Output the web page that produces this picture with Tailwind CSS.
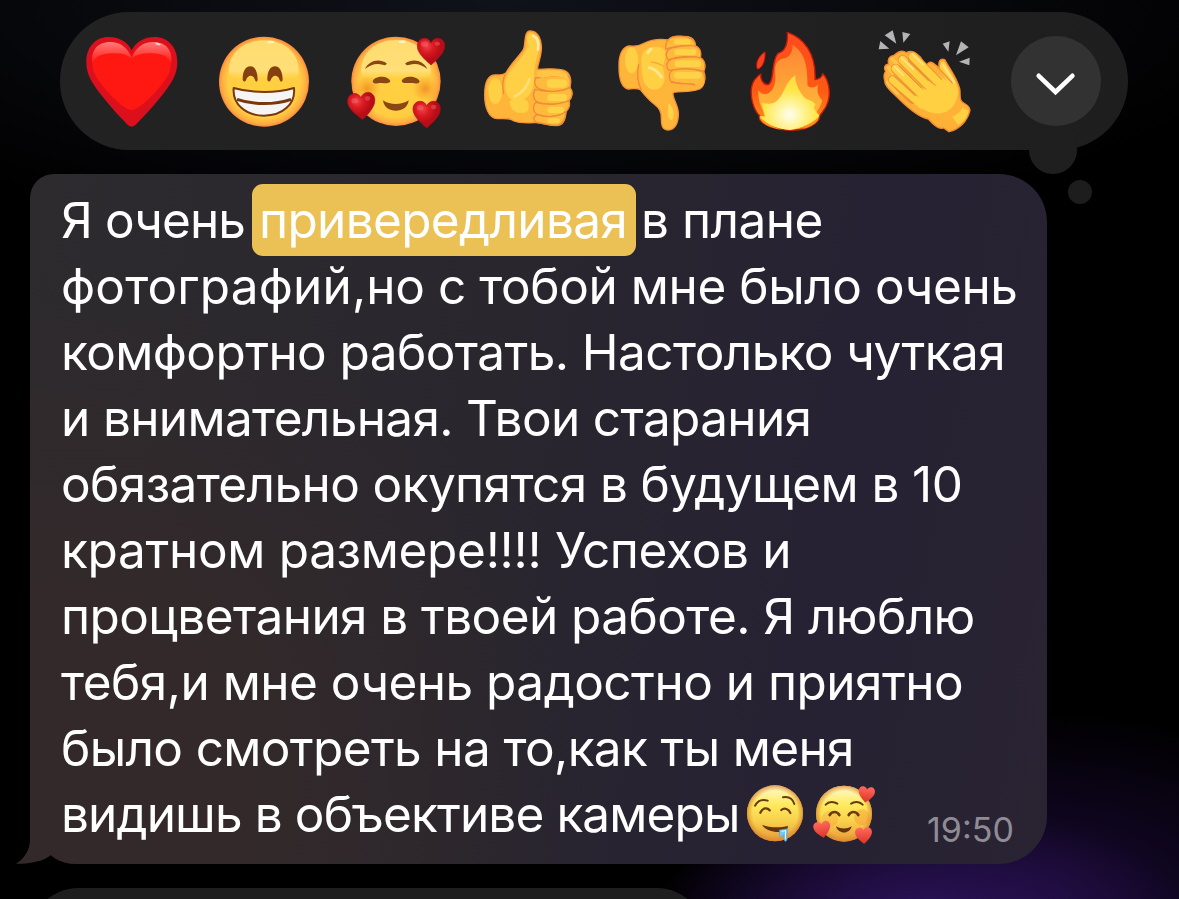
<!DOCTYPE html>
<html lang="ru">
<head>
<meta charset="utf-8">
<title>Сообщение</title>
<script src="https://cdn.jsdelivr.net/npm/@tailwindcss/browser@4"></script>
</head>
<body class="h-[899px] w-[1179px] overflow-hidden bg-black bg-[radial-gradient(ellipse_270px_110px_at_920px_915px,#2b1257_0%,#2b125700_100%),radial-gradient(ellipse_360px_200px_at_1030px_910px,#1b0a38_0%,#1b0a3800_100%),radial-gradient(ellipse_800px_240px_at_500px_0px,#10121a_0%,transparent_100%)] font-['Inter',sans-serif] text-white">
<svg class="absolute size-0">
  <defs>
    <radialGradient id="face"><stop offset="0" stop-color="#ffd03f"/><stop offset=".8" stop-color="#ffcd42"/><stop offset=".93" stop-color="#ffae42"/><stop offset="1" stop-color="#fb8a3c"/></radialGradient>
    <linearGradient id="shine" x1="0" y1="0" x2="0" y2="1"><stop offset="0" stop-color="#ffdc70"/><stop offset=".8" stop-color="#ffdf78"/><stop offset="1" stop-color="#ffd95f" stop-opacity=".2"/></linearGradient>
    <linearGradient id="gloss" x1="0" y1="0" x2="0" y2="1"><stop offset="0" stop-color="#fffbd0"/><stop offset=".35" stop-color="#fdea5c"/><stop offset=".65" stop-color="#f8cf4b"/><stop offset="1" stop-color="#e7973a"/></linearGradient>
    <radialGradient id="rim"><stop offset=".8" stop-color="#e08a2e" stop-opacity="0"/><stop offset="1" stop-color="#d9822b" stop-opacity=".75"/></radialGradient>
    <radialGradient id="blush"><stop offset="0" stop-color="#ef8c1f" stop-opacity=".85"/><stop offset="1" stop-color="#f79a2a" stop-opacity="0"/></radialGradient>
    <radialGradient id="ruby" cx=".35" cy=".3"><stop offset="0" stop-color="#f0414a"/><stop offset=".5" stop-color="#d91a20"/><stop offset="1" stop-color="#b80d18"/></radialGradient>
    <linearGradient id="coral" x1="0" y1="0" x2="0" y2="1"><stop offset="0" stop-color="#ff6a5c"/><stop offset="1" stop-color="#dc3328"/></linearGradient>
    <linearGradient id="lobe" x1="0" y1="0" x2="0" y2="1"><stop offset="0" stop-color="#ff7a78"/><stop offset="1" stop-color="#ff1712"/></linearGradient>
    <linearGradient id="flame" x1="0" y1="0" x2="0" y2="1"><stop offset="0" stop-color="#ff4a1c"/><stop offset=".6" stop-color="#fb5a14"/><stop offset="1" stop-color="#ff9a1c"/></linearGradient>
    <linearGradient id="flame2" x1="0" y1="0" x2="0" y2="1"><stop offset="0" stop-color="#ff8434"/><stop offset=".6" stop-color="#ffac38"/><stop offset="1" stop-color="#ffc638"/></linearGradient>
    <radialGradient id="glow" cx=".5" cy=".72" r=".6"><stop offset="0" stop-color="#fffef0"/><stop offset=".3" stop-color="#fff6a8"/><stop offset=".75" stop-color="#ffe648"/><stop offset="1" stop-color="#ffdf40"/></radialGradient>
    <path id="heart" d="M0 40C-7 33 -41 8 -41 -16C-41 -31 -31 -40 -20 -40C-10 -40 -3 -34 0 -26C4 -34 11 -40 21 -40C32 -40 41 -31 41 -17C41 8 7 33 0 40Z"/>
  </defs>
</svg>
<main class="flex flex-col items-start pt-3">
  <section class="relative ml-[60px] flex h-[138px] w-[1068px] rounded-full bg-linear-to-r from-[#222223] via-[#222222] to-[#1e1e1e] pl-[6px]">
    <div class="absolute top-[114px] left-[969px] size-12 rounded-full bg-[#1f1f20]"></div>
    <div class="absolute top-[168px] left-[1008px] size-6 rounded-full bg-[#1d1d1d]"></div>

    <svg class="h-[138px] w-[132px]" viewBox="18 6 396 414">
      <path d="M215 350C206 350 200 341 190 331C160 300 118 251 98 219C84 196 79 178 79 155C79 112 106 81 146 81C177 81 202 95 215 121C228 95 253 81 284 81C324 81 352 112 352 155C352 178 346 198 332 220C312 252 270 301 240 331C230 341 224 350 215 350Z" fill="#dc0f1c"/>
      <path d="M215 300C188 300 120 226 102 188C88 145 106 98 150 96C182 96 203 113 215 140C227 113 248 96 280 96C324 98 343 145 328 188C310 226 242 300 215 300Z" fill="#ff1712"/>
      <path d="M97 160C92 122 112 96 150 96C182 96 203 113 215 145C200 133 180 128 155 130C125 131 105 140 97 160Z" fill="url(#lobe)"/>
      <path d="M334 160C339 122 319 96 281 96C248 96 227 113 215 145C230 133 250 128 276 130C306 131 326 140 334 160Z" fill="url(#lobe)"/>
      <ellipse cx="294" cy="102" rx="8" ry="3" fill="#ffd9d6" transform="rotate(12 294 102)"/>
    </svg>

    <svg class="h-[138px] w-[132px]" viewBox="414 6 396 414">
      <circle cx="612" cy="215" r="135" fill="url(#face)"/>
      <path d="M507 190C503 130 550 91 612 91C674 91 720 130 716 190C712 212 670 204 612 204C554 204 511 212 507 190Z" fill="url(#shine)"/>
      <ellipse cx="632" cy="96" rx="11" ry="4" fill="#fff3c4"/>
      <path d="M548 209C548 185 556 169 571 169C586 169 593 186 593 211C590 216 588 217 585 210C580 193 563 193 558 211C554 217 550 215 548 209Z" fill="#86400f"/>
      <path d="M622 209C622 185 630 169 645 169C660 169 668 186 668 211C665 216 662 217 659 210C654 193 637 193 632 211C628 217 624 215 622 209Z" fill="#86400f"/>
      <path d="M521 234C575 250 650 250 702 234C707 282 668 317 612 317C556 317 517 282 521 234Z" fill="#f5f5f6" stroke="#7a360d" stroke-width="6" stroke-linejoin="round"/>
      <path d="M531 268C580 285 645 285 693 268" fill="none" stroke="#7a360d" stroke-width="9"/>
    </svg>

    <svg class="h-[138px] w-[132px]" viewBox="0 6 396 414">
      <circle cx="198" cy="214" r="134" fill="url(#face)"/>
      <path d="M94 190C90 130 136 90 198 90C260 90 306 130 302 190C298 212 256 204 198 204C140 204 98 212 94 190Z" fill="url(#shine)"/>
      <ellipse cx="217" cy="95" rx="11" ry="4" fill="#fff3c4"/>
      <circle cx="112" cy="236" r="40" fill="url(#blush)"/>
      <circle cx="286" cy="236" r="40" fill="url(#blush)"/>
      <path d="M105 177C117 151 148 144 170 160C169 167 163 166 158 164C138 158 120 165 105 177ZM292 177C280 151 249 144 226 160C227 167 234 166 239 164C259 158 277 165 292 177Z" fill="#8a4711"/>
      <path d="M128 214C134 196 173 196 181 213C179 221 171 220 155 219C139 219 131 225 128 214ZM215 213C222 196 261 196 269 214C266 225 258 219 242 219C226 219 217 221 215 213Z" fill="#8a4711"/>
      <path d="M159 271C180 286 214 286 236 271C232 313 163 313 159 271Z" fill="#8a4711"/>
      <g fill="url(#ruby)" stroke="#a90c17" stroke-width="2">
        <use href="#heart" transform="translate(303 125)"/>
        <use href="#heart" transform="translate(95 289) rotate(-5)"/>
        <use href="#heart" transform="translate(290 314)"/>
      </g>
      <g fill="#ff8088" opacity=".35">
        <ellipse cx="284" cy="102" rx="11" ry="8"/><ellipse cx="322" cy="101" rx="8" ry="6"/>
        <ellipse cx="74" cy="272" rx="10" ry="8"/><ellipse cx="113" cy="265" rx="8" ry="7"/>
        <ellipse cx="270" cy="293" rx="10" ry="8"/><ellipse cx="311" cy="291" rx="8" ry="7"/>
      </g>
    </svg>

    <svg class="h-[138px] w-[132px]" viewBox="396 6 396 414">
      <path d="M464 255C464 220 474 197 493 195C506 194 519 198 529 187C545 157 570 137 580 119C588 104 580 63 601 63C624 63 636 90 634 118C633 142 624 160 622 178C649 176 684 174 704 182C721 190 726 212 719 232C730 244 727 264 717 272C720 288 715 297 708 303C707 326 700 347 680 347C655 347 645 339 617 338C590 339 568 340 552 333C538 322 520 326 502 326C476 326 464 291 464 255Z" fill="#ffb53a" stroke="#f5943a" stroke-width="4"/>
      <ellipse cx="496" cy="243" rx="21" ry="39" fill="#ffd043"/>
      <path d="M530 200C548 169 584 138 593 110C592 96 588 74 602 70C622 74 630 94 624 128C615 160 611 180 613 208C609 256 590 270 560 272C530 275 518 230 530 200Z" fill="#ffd046"/>
      <path d="M609 77C622 82 628 97 624 119" fill="none" stroke="#ffe9a6" stroke-width="8" stroke-linecap="round"/>
      <path d="M598 208C592 231 577 247 555 259" fill="none" stroke="#ffe078" stroke-width="8" stroke-linecap="round"/>
      <path d="M538 272C560 269 582 259 594 275C598 295 599 309 575 309C552 308 540 297 538 272Z" fill="#ffd044"/>
      <path d="M525 192C517 214 517 235 521 252" fill="none" stroke="#ee8c37" stroke-width="4"/>
      <g fill="#ffb93d" stroke="#ee8c37" stroke-width="4" stroke-linejoin="round">
        <path d="M616 204C611 225 617 236 640 240C665 249 700 246 720 232C725 203 716 192 695 196C665 198 635 202 616 204Z"/>
        <path d="M615 238C606 255 611 275 630 279C657 286 698 284 717 272C730 257 728 241 719 233C690 248 642 246 615 238Z"/>
        <path d="M617 277C606 290 609 308 624 314C652 324 690 321 709 304C719 292 720 279 716 272C685 286 645 285 617 277Z"/>
        <path d="M621 314C605 323 610 338 630 339C650 342 661 347 682 346C704 341 707 315 708 304C684 324 645 322 621 314Z"/>
      </g>
      <path d="M624 184C655 179 690 180 704 188C714 194 716 204 716 216C706 199 690 194 640 203C622 205 618 192 624 184Z" fill="#ffc546"/>
      <g fill="#ffd347"><rect x="650" y="208" width="62" height="25" rx="12"/><rect x="652" y="252" width="60" height="22" rx="11"/><rect x="652" y="290" width="50" height="20" rx="10"/><rect x="652" y="325" width="38" height="13" rx="6"/></g>
    </svg>

    <svg class="h-[138px] w-[132px]" viewBox="-18 6 396 414">
      <path d="M57 170C56 130 70 108 91 108C108 110 120 107 132 100C150 91 178 86 205 90C215 75 244 78 264 80C281 84 286 95 286 107C301 114 303 128 301 143C316 153 317 172 311 184C319 203 314 235 292 239C268 247 243 243 220 247C213 258 234 282 235 309C236 333 228 360 204 360C185 360 184 342 184 325C185 304 177 294 163 283C144 268 132 253 121 239C107 231 97 238 85 237C66 233 57 205 57 170Z" fill="#ffb53a" stroke="#f5943a" stroke-width="4"/>
      <ellipse cx="95" cy="151" rx="20" ry="39" fill="#ffd043"/>
      <path d="M125 165C120 137 130 113 163 111C188 110 199 119 196 139C194 158 186 165 191 185C201 218 184 239 161 239C134 236 125 207 125 165Z" fill="#ffd043"/>
      <path d="M143 128L153 117M148 173C164 177 175 187 184 201" fill="none" stroke="#ffe58f" stroke-width="9" stroke-linecap="round"/>
      <path d="M153 157C167 155 182 164 191 169" fill="none" stroke="#f9a83a" stroke-width="4"/>
      <path d="M116 162C111 190 113 219 124 240" fill="none" stroke="#ee8c37" stroke-width="4"/>
      <g fill="#ffb93d" stroke="#ee8c37" stroke-width="4" stroke-linejoin="round">
        <path d="M198 118C194 97 205 81 230 80C267 76 287 88 286 109C260 106 220 108 198 118Z"/>
        <path d="M205 150C192 132 200 116 224 112C254 106 279 104 291 111C305 119 303 137 301 144C270 137 231 139 205 150Z"/>
        <path d="M206 181C195 166 201 150 221 146C249 141 284 138 302 144C318 153 316 175 311 184C285 176 231 179 206 181Z"/>
        <path d="M211 213C205 196 207 183 224 179C257 174 288 177 307 184C319 200 315 234 291 238L283 223C250 221 230 223 211 213Z"/>
      </g>
      <g fill="#ffd347"><rect x="222" y="88" width="50" height="15" rx="7"/><rect x="223" y="118" width="66" height="17" rx="8"/><rect x="224" y="151" width="79" height="20" rx="10"/><rect x="222" y="186" width="82" height="20" rx="10"/></g>
      <path d="M208 214C245 224 258 219 284 224C306 222 311 216 313 205C315 229 302 237 284 240L218 245C195 235 204 224 208 214Z" fill="#ffb53a"/>
      <path d="M212 216C240 223 262 219 285 225" fill="none" stroke="#ee8c37" stroke-width="4"/>
      <path d="M205 278C222 294 225 313 216 331C198 327 205 300 205 278Z" fill="#ffd347"/>
    </svg>

    <svg class="h-[138px] w-[132px]" viewBox="378 6 396 414">
      <path d="M495 125C475 139 466 157 471 176C480 181 499 158 495 125Z" fill="#f5431d" stroke="#b50f10" stroke-width="3"/>
      <path d="M562 67C609 83 649 128 645 209C655 208 666 203 668 191C685 207 693 244 684 275C678 297 668 304 657 320C661 329 650 341 620 354C588 364 548 363 512 350C487 340 472 327 480 319C460 300 450 260 455 231C458 214 469 201 482 192C481 209 489 224 504 224C525 217 511 158 534 130C557 124 564 99 562 67Z" fill="url(#flame)" stroke="#c51a0d" stroke-width="4" stroke-linejoin="round"/>
      <path d="M578 104C609 126 624 155 622 225C632 239 649 232 655 222C648 247 657 260 667 272C658 299 638 334 570 358C510 341 472 300 475 240C495 270 530 244 526 195C523 160 532 147 557 144C573 137 578 120 578 104Z" fill="url(#flame2)"/>
      <path d="M585 196C587 227 600 246 611 260C622 272 633 267 647 283C636 295 649 304 659 318C641 337 610 354 570 360C530 356 495 344 478 319L496 319C488 308 489 291 486 278C507 284 527 281 536 266C555 248 552 223 585 196Z" fill="url(#glow)"/>
      <path d="M478 321C500 340 520 351 545 358C520 357 484 345 478 321ZM656 321C640 340 622 351 600 358C625 355 655 341 656 321Z" fill="#ff9317"/>
    </svg>

    <svg class="h-[138px] w-[132px]" viewBox="-6 6 396 414">
      <path d="M74 76L98 61L109 101ZM127 66L151 72L130 98ZM61 93L88 116L56 118ZM248 101L269 94L265 125ZM303 94L326 112L288 136ZM329 143L328 166L297 155Z" fill="#b4b4b6"/>
      <path d="M204 177C196 158 210 151 224 163L238 174C234 154 240 144 254 149C267 174 289 199 299 236C303 254 295 271 311 279C323 285 329 291 330 301C322 334 298 358 267 365L251 354C236 360 220 344 205 327C177 322 151 300 120 270C96 245 73 230 74 211C70 197 72 190 77 184C70 174 73 164 86 162C82 149 87 138 102 136C113 126 127 119 139 128C156 118 169 130 181 141Z" fill="#ffb137" stroke="#f28a35" stroke-width="4"/>
      <path d="M86 173L112 205M97 147L120 172M83 217L112 250" stroke="#ffc64a" stroke-width="10" stroke-linecap="round"/>
      <path d="M239 177C240 157 248 150 254 157C264 180 288 207 294 242C294 274 276 302 250 308C222 317 190 301 172 284C145 262 112 236 91 213C92 203 103 203 112 210L200 190L230 190L262 214Z" fill="#ffd041"/>
      <g fill="none" stroke-linecap="round">
        <path d="M158 140L232 214" stroke="#ee9236" stroke-width="30"/>
        <path d="M158 140L240 222" stroke="#ffd041" stroke-width="24"/>
        <path d="M128 150L202 224" stroke="#ee9236" stroke-width="30"/>
        <path d="M128 150L215 237" stroke="#ffd041" stroke-width="24"/>
        <path d="M107 176L176 245" stroke="#ee9236" stroke-width="30"/>
        <path d="M107 176L195 262" stroke="#ffd041" stroke-width="24"/>
        <path d="M98 210L158 268" stroke="#ee9236" stroke-width="28"/>
        <path d="M98 210L185 285" stroke="#ffd041" stroke-width="22"/>
        <path d="M157 133L190 164M124 143L160 178M103 170L130 196" stroke="#ffe08a" stroke-width="5"/>
        <path d="M145 152L205 211M118 168L184 232M102 197L165 256" stroke="#ee9236" stroke-width="4"/>
        <path d="M230 168L277 219" stroke="#ee9236" stroke-width="4"/>
        <path d="M250 166C261 185 273 200 282 217" stroke="#ffe183" stroke-width="7"/>
      </g>
      <path d="M276 319C294 314 303 302 307 293L326 303C322 326 304 342 293 344Z" fill="#ffd041"/>
    </svg>

    <button class="mt-6 ml-[21px] flex size-[90px] items-center justify-center rounded-full bg-[#323232]">
      <svg class="size-[90px]" viewBox="0 0 90 90" fill="none" stroke="#fff" stroke-width="4.6" stroke-linecap="round" stroke-linejoin="miter"><path d="M27.700 39.800L44.500 56L61.400 39.800"/></svg>
    </button>
  </section>

  <article class="relative mt-6 ml-[30px] h-[690px] w-[1017px] rounded-tl-[24px] rounded-r-[48px] rounded-bl-[20px] bg-[radial-gradient(ellipse_560px_540px_at_0px_620px,#33292a_0%,#33292a_35%,#33292a00_100%),linear-gradient(100deg,#2d2b2e_0%,#29262e_45%,#262233_75%,#292332_100%)] pt-[13px] pl-[31px] text-[49.5px] leading-[66px] whitespace-nowrap">
    <svg class="absolute -left-[14px] bottom-0 h-[50px] w-[94px]" viewBox="0 0 94 50"><path d="M14 0V24C14 35 8 44 0 49.500C15 50 28 47 34.500 41C42 47 50 50 62 50L14 50Z" fill="#000"/><path d="M14 0V26C14 36 8 45 0 49.800C15 50 28 47 34.500 41C42 47 50 50 62 50H94V0Z" fill="#33292a"/></svg>
    <div class="relative -mt-[3px] flex h-[69px]">
      <span class="w-[191px] pt-[3px] tracking-[-0.9px]">Я очень</span>
      <mark class="h-[72px] w-[384px] rounded-[11px] bg-[#ebc155] pt-[3px] pl-[7px] tracking-[-0.66px] text-white">привередливая</mark>
      <span class="pt-[3px] pl-[5px] tracking-[-0.5px]">в плане</span>
    </div>
    <p class="relative tracking-[-0.42px]"><span class="tracking-[0.15px]">фотографий,</span>но с тобой мне было очень</p>
    <p class="relative tracking-[-0.58px]">комфортно работать. Настолько чуткая</p>
    <p class="relative tracking-[-0.65px]">и внимательная. Твои старания</p>
    <p class="relative tracking-[-0.6px]">обязательно окупятся в будущем в 10</p>
    <p class="relative tracking-[-0.32px]">кратном размере!!!! Успехов и</p>
    <p class="relative tracking-[-0.58px]">процветания в твоей работе. Я люблю</p>
    <p class="relative tracking-[-0.52px]">тебя,и мне очень радостно и приятно</p>
    <p class="relative tracking-[-0.64px]">было смотреть на то,как ты меня</p>
    <div class="relative flex h-[66px]">
      <p class="w-[684px] tracking-[-0.88px]">видишь в объективе камеры</p>
      <svg class="mt-[2px] size-[62px]" viewBox="45 40 186 186">
        <circle cx="135" cy="131" r="84" fill="url(#gloss)"/><circle cx="135" cy="131" r="84" fill="url(#rim)"/>
        <path d="M75 108C84 91 97 88 113 93M159 83C175 80 188 87 193 103" fill="none" stroke="#6b3b0c" stroke-width="6" stroke-linecap="round"/>
        <path d="M91 129C98 113 112 113 119 122M154 121C163 113 177 118 181 130" fill="none" stroke="#6b3b0c" stroke-width="7" stroke-linecap="round"/>
        <path d="M96 165C120 175 149 175 174 169C174 195 112 192 96 165Z" fill="#65340b"/>
        <path d="M148 181L173 177C175 187 169 190 171 211C166 219 161 216 162 197C156 193 158 203 150 202C146 197 150 189 148 181Z" fill="#72c9f5" stroke="#3a9ed6" stroke-width="1.500"/>
        <path d="M154 185L167 183L166 209" fill="none" stroke="#e6f9ff" stroke-width="3"/>
      </svg>
      <svg class="mt-[2px] ml-[5px] size-[64px]" viewBox="246 40 192 192">
        <circle cx="342" cy="132" r="84" fill="url(#gloss)"/><circle cx="342" cy="132" r="84" fill="url(#rim)"/>
        <circle cx="300" cy="147" r="24" fill="#f4762b" opacity=".2"/><circle cx="396" cy="143" r="24" fill="#f4762b" opacity=".3"/>
        <path d="M287 105C297 94 312 95 322 102M363 102C372 95 388 94 398 105" fill="none" stroke="#6b3b0c" stroke-width="6" stroke-linecap="round"/>
        <path d="M299 136C306 124 321 124 328 136M356 136C363 124 378 124 385 136" fill="none" stroke="#6b3b0c" stroke-width="8" stroke-linecap="round"/>
        <path d="M318 170C334 179 350 179 365 170C359 195 325 195 318 170Z" fill="#65340b"/>
        <g fill="url(#coral)"><use href="#heart" transform="translate(409 75) rotate(8) scale(.6)"/><use href="#heart" transform="translate(277 180) rotate(-10) scale(.62)"/><use href="#heart" transform="translate(401 198) rotate(-3) scale(.62)"/></g>
      </svg>
      <time class="pt-[16px] pl-[51px] text-[34px] text-[#908c96]">19:50</time>
    </div>
  </article>
  <div class="mt-6 ml-[30px] h-[11px] w-[675px] overflow-hidden">
    <svg class="h-[11px] w-[675px]" viewBox="0 0 675 11"><rect width="675" height="96" rx="48" fill="#1e1e1e"/></svg>
  </div>
</main>
</body>
</html>
